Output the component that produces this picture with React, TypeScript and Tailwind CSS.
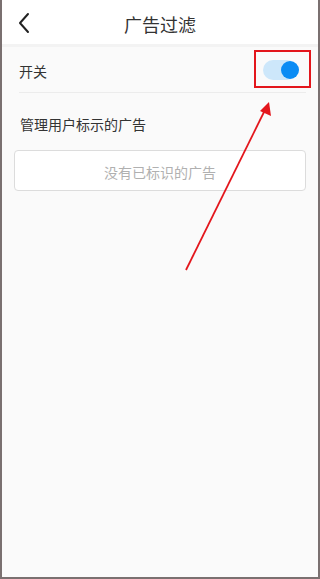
import React from "react";

export default function App() {
  return (
    <div
      className="relative w-[320px] h-[579px] overflow-hidden bg-[#fafafa] border-l-2 border-r-2 border-b-2 border-[#7a7070] text-[#333]"
      style={{ fontFamily: '"Noto Sans CJK SC", "Noto Sans", sans-serif' }}
    >
      {/* Header */}
      <div className="relative h-[47px] bg-white flex items-center justify-center border-b-[3px] border-[#f3f3f3]">
        <svg className="absolute left-[15px] top-[12px]" width="14" height="22" viewBox="0 0 14 22" fill="none">
          <path d="M11 2 L3 11 L11 20" stroke="#222" strokeWidth="2" strokeLinecap="round" strokeLinejoin="round" />
        </svg>
        <span className="text-[18px] leading-none text-[#333] mt-[4px]">广告过滤</span>
      </div>

      {/* Switch row */}
      <div className="flex items-center justify-between h-[45px] pl-[17px] pr-[20px]">
        <span className="text-[14px] leading-none text-[#333] mt-[2px]">开关</span>
        <div className="relative w-[34px] h-[20px] rounded-full bg-[#cde7fa] mr-[1px]">
          <div className="absolute right-[-2px] top-[1px] w-[18px] h-[18px] rounded-full bg-[#0b8cf4]" />
        </div>
      </div>
      <div className="ml-[17px] mr-[12px] h-px bg-[#ececec]" />

      {/* Section title */}
      <div className="pl-[18px] pt-[22px] pb-[19px] leading-none">
        <span className="text-[14px] leading-none text-[#333]">管理用户标示的广告</span>
      </div>

      <div className="mx-[12px] h-[41px] rounded-[4px] border border-[#dcdcdc] bg-white flex items-center justify-center">
        <span className="text-[14px] leading-none text-[#b0b0b0] mt-[3px]">没有已标识的广告</span>
      </div>

      {/* Annotation: red box */}
      <div className="absolute left-[252px] top-[50px] w-[57px] h-[38px] border-2 border-[#e3161c]" />

      {/* Annotation: arrow */}
      <svg className="absolute left-0 top-0" width="320" height="579" viewBox="0 0 320 579">
        <line x1="184" y1="270" x2="263" y2="110" stroke="#e3161c" strokeWidth="1.8" />
        <polygon points="267,102 269,116 258,111" fill="#e3161c" />
      </svg>
    </div>
  );
}
